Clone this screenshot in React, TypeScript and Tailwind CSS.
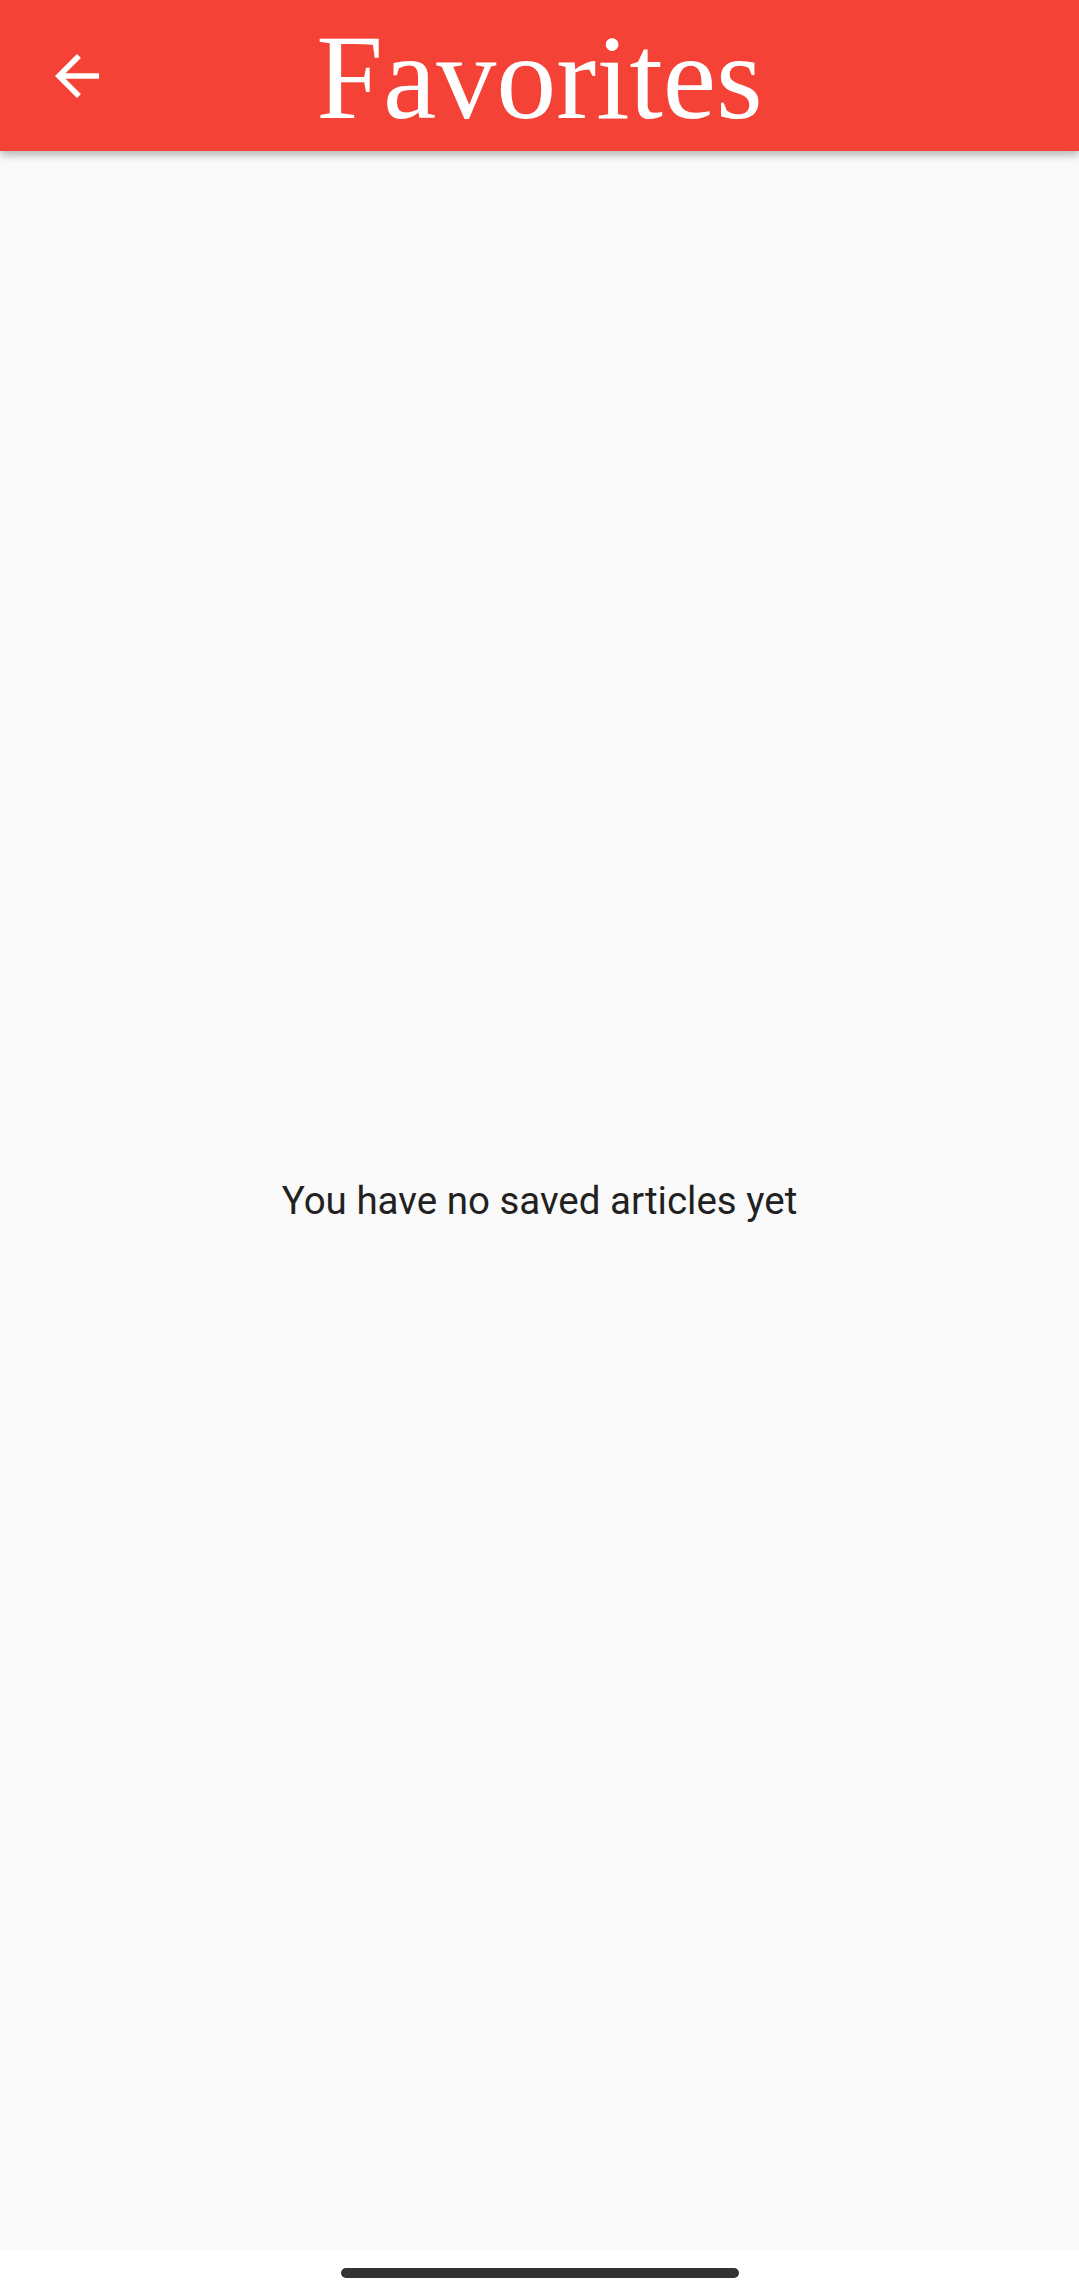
import React from 'react';

const BackArrow: React.FC = () => (
  <svg viewBox="0 0 24 24" className="w-[66px] h-[66px]" fill="white">
    <path d="M20 11H7.83l5.59-5.59L12 4l-8 8 8 8 1.41-1.41L7.83 13H20v-2z" />
  </svg>
);

const App: React.FC = () => {
  return (
    <div className="w-[1079px] h-[2294px] flex flex-col bg-white overflow-hidden">
      <header className="relative z-10 h-[151px] shrink-0 bg-[#f44336] flex items-center shadow-[0_4px_8px_rgba(0,0,0,0.28)]">
        <button className="ml-[44px] flex items-center justify-center">
          <BackArrow />
        </button>
        <h1
          className="absolute left-0 right-0 top-0 h-[151px] flex items-center justify-center text-white text-[120px] leading-none pointer-events-none pt-[4px]"
          style={{ fontFamily: '"Liberation Serif", "DejaVu Serif", serif' }}
        >
          Favorites
        </h1>
      </header>

      <main className="flex-1 bg-[#fafafa] flex items-center justify-center">
        <p
          className="text-[38.5px] text-[#212121] leading-none"
          style={{ fontFamily: 'Roboto, "Noto Sans", sans-serif' }}
        >
          You have no saved articles yet
        </p>
      </main>

      <div className="h-[43px] shrink-0 bg-white flex justify-center pt-[17px]">
        <div className="w-[398px] h-[10px] rounded-full bg-[#333333]" />
      </div>
    </div>
  );
};

export default App;
